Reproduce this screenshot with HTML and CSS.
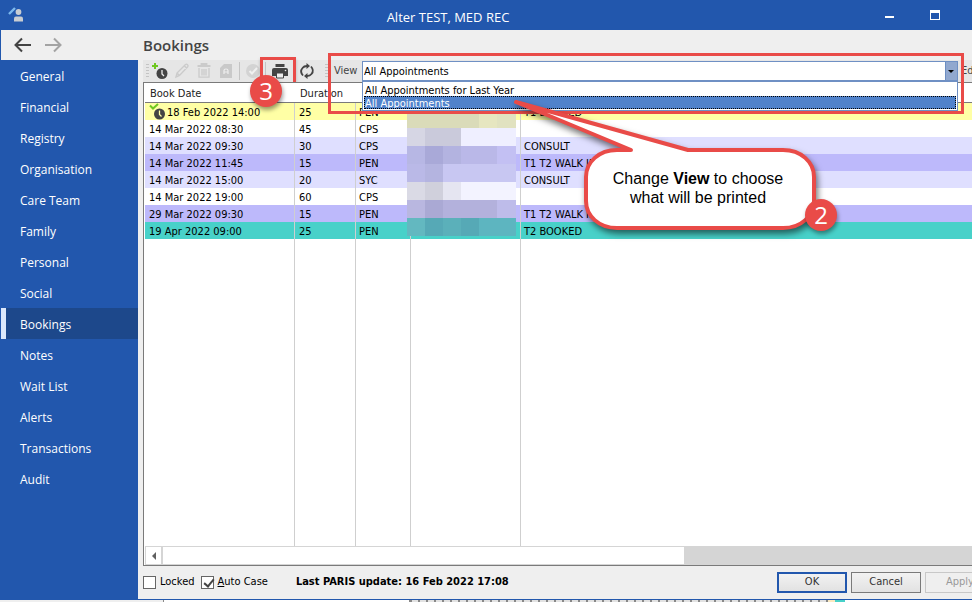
FILE: index.html
```html
<!DOCTYPE html>
<html lang="en">
<head>
<meta charset="utf-8">
<title>Alter TEST, MED REC</title>
<link rel="stylesheet" href="styles.css">
</head>
<body>
<div class="window">
  <header class="titlebar">
    <svg class="app-icon" width="16" height="16" viewBox="0 0 16 16" aria-hidden="true">
      <path d="M1 7 7 1" stroke="#7db9ee" stroke-width="2.4"/>
      <circle cx="10.500" cy="5" r="2.900" fill="#c9cdd2"/>
      <path d="M6 14.500v-3q0-2 2-2h5q2 0 2 2v3z" fill="#c9cdd2"/>
    </svg>
    <h1 class="title">Alter TEST, MED REC</h1>
    <div class="controls">
      <button class="ctl" aria-label="Minimize"><svg width="10" height="12" viewBox="0 0 10 12"><path d="M0 7h9v2H0z" fill="#fff"/></svg></button>
      <button class="ctl" aria-label="Maximize"><svg width="10" height="12" viewBox="0 0 10 12"><path d="M0 1h10v10H0zM1 4v6h8V4z" fill="#fff" fill-rule="evenodd"/></svg></button>
    </div>
  </header>

  <div class="heading">
    <div class="history">
      <button class="ctl" aria-label="Back"><svg width="18" height="16" viewBox="0 0 18 16" fill="none" stroke="#444" stroke-width="2"><path d="M17 8H2M8 1.500 1.500 8 8 14.500"/></svg></button>
      <button class="ctl" aria-label="Forward"><svg width="18" height="16" viewBox="0 0 18 16" fill="none" stroke="#a3a3a3" stroke-width="2"><path d="M1 8h15M10 1.500 16.500 8 10 14.500"/></svg></button>
    </div>
    <h2 class="page-title">Bookings</h2>
  </div>

  <div class="body">
    <nav class="sidebar">
      <a href="#">General</a>
      <a href="#">Financial</a>
      <a href="#">Registry</a>
      <a href="#">Organisation</a>
      <a href="#">Care Team</a>
      <a href="#">Family</a>
      <a href="#">Personal</a>
      <a href="#">Social</a>
      <a href="#" class="active" aria-current="page">Bookings</a>
      <a href="#">Notes</a>
      <a href="#">Wait List</a>
      <a href="#">Alerts</a>
      <a href="#">Transactions</a>
      <a href="#">Audit</a>
    </nav>

    <main class="content">
      <div class="toolbar">
        <span class="grip"></span>
        <button class="tool" aria-label="New booking"><svg width="18" height="18" viewBox="0 0 18 18"><path d="M4 1v6M1 4h6" stroke="#6fc821" stroke-width="2"/><circle cx="11" cy="11.500" r="5.500" fill="#444"/><path d="M11 8v4l2 2" fill="none" stroke="#eee" stroke-width="1.300"/></svg></button>
        <button class="tool" aria-label="Edit booking"><svg width="18" height="18" viewBox="0 0 18 18" fill="none" stroke="#cbcbcb" stroke-width="1.400"><path d="m3 15 1-4 8.500-8.500q1-.8 2 .2t.2 2L6.500 13.500zM11.500 4l2.500 2.500M4 11l2.500 2.500"/></svg></button>
        <button class="tool" aria-label="Delete booking"><svg width="18" height="18" viewBox="0 0 18 18" fill="none" stroke="#cbcbcb"><path d="M2.500 4h13M6.500 3.500V2h5v1.500" stroke-width="1.800"/><path d="M4 6v9.200h10V6M7 7v6.500M9 7v6.500M11 7v6.500" stroke-width="1.300"/></svg></button>
        <button class="tool" aria-label="Archive booking"><svg width="18" height="18" viewBox="0 0 18 18"><path d="M7 2h8v14H3V6z" fill="#c9c9c9"/><path d="M7 12V8.500q0-1.500 2-1.500t2 1.500V12M7 10h4" fill="none" stroke="#eee" stroke-width="1.200"/></svg></button>
        <span class="divider"></span>
        <button class="tool" aria-label="Confirm booking"><svg width="18" height="18" viewBox="0 0 18 18"><circle cx="9" cy="9" r="7" fill="#d3d3d3"/><path d="m5.500 9 2.500 2.500L13 6" fill="none" stroke="#f0f0f0" stroke-width="2"/></svg></button>
        <div class="print">
          <span class="divider"></span>
          <button class="tool" aria-label="Print"><svg width="18" height="18" viewBox="0 0 18 18"><path d="M4.500 2h9v3h-9z" fill="#444"/><path d="M3 6h12q2 0 2 2v6H1V8q0-2 2-2z" fill="#444"/><path d="M5.500 11h7v5h-7z" fill="#eee" stroke="#444"/><circle cx="14.500" cy="8.500" r=".8" fill="#eee"/></svg></button>
          <span class="print-frame"></span>
          <span class="badge badge-print">3</span>
        </div>
        <button class="tool refresh" aria-label="Refresh"><svg width="18" height="18" viewBox="0 0 18 18"><path d="M5 13.500Q1.500 9.500 4.500 6 6 4 9 4M13 4.500q3.500 4 .5 7.500Q12 14 9 14" fill="none" stroke="#444" stroke-width="1.800"/><path d="M8.500 1v6l3.500-3zM9.500 11v6L6 14z" fill="#444"/></svg></button>
        <div class="view">
          <span class="grip"></span>
          <label for="view">View</label>
          <div class="combo">
            <select id="view"><option>All Appointments for Last Year</option><option selected>All Appointments</option></select>
            <svg class="arrow" width="12" height="18" viewBox="0 0 12 18" aria-hidden="true"><path d="M0 0h12v18H0z" fill="#91a8cf"/><path d="M0 0v18" stroke="#6c8ec2" stroke-width="2"/><path d="M3 8h6L6 11z" fill="#000"/></svg>
            <ul class="list" aria-label="Views">
              <li>All Appointments for Last Year</li>
              <li class="chosen">All Appointments</li>
            </ul>
          </div>
          <span class="view-frame"></span>
        </div>
        <span class="more">Edit</span>
      </div>

      <div class="grid">
        <table>
          <colgroup><col class="c-date"><col class="c-dur"><col class="c-site"><col class="c-name"><col></colgroup>
          <thead><tr><th>Book Date</th><th>Duration</th><th></th><th></th><th></th></tr></thead>
          <tbody>
            <tr class="yellow"><td class="pending"><svg width="18" height="17" viewBox="0 0 18 17" aria-hidden="true"><path d="m1 2.500 3 3L9 1" fill="none" stroke="#6fc821" stroke-width="2"/><circle cx="10.500" cy="11" r="5.500" fill="#444"/><path d="M10.500 7.500v4l2 2" fill="none" stroke="#ffa" stroke-width="1.300"/></svg>18 Feb 2022 14:00</td><td>25</td><td>PEN</td><td></td><td>T1 BOOKED</td></tr>
            <tr><td>14 Mar 2022 08:30</td><td>45</td><td>CPS</td><td></td><td></td></tr>
            <tr class="pale"><td>14 Mar 2022 09:30</td><td>30</td><td>CPS</td><td></td><td>CONSULT</td></tr>
            <tr class="violet"><td>14 Mar 2022 11:45</td><td>15</td><td>PEN</td><td></td><td>T1 T2 WALK IN</td></tr>
            <tr class="pale"><td>14 Mar 2022 15:00</td><td>20</td><td>SYC</td><td></td><td>CONSULT</td></tr>
            <tr><td>14 Mar 2022 19:00</td><td>60</td><td>CPS</td><td></td><td></td></tr>
            <tr class="violet"><td>29 Mar 2022 09:30</td><td>15</td><td>PEN</td><td></td><td>T1 T2 WALK IN</td></tr>
            <tr class="teal"><td>19 Apr 2022 09:00</td><td>25</td><td>PEN</td><td></td><td>T2 BOOKED</td></tr>
            <tr class="filler"><td></td><td></td><td></td><td></td><td></td></tr>
          </tbody>
        </table>
        <svg class="mosaic" width="109" height="126" viewBox="0 0 109 126" shape-rendering="crispEdges" aria-hidden="true">
          <path fill="#dadbb9" d="M0 0h72v18H0z"/><path fill="#e6e6c0" d="M72 0h18v18H72z"/><path fill="#e1e2c0" d="M90 0h19v18H90z"/>
          <path fill="#d6d6e4" d="M0 18h18v18H0z"/><path fill="#cacadb" d="M18 18h36v18H18z"/><path fill="#efefff" d="M54 18h55v18H54z"/>
          <path fill="#b7b7e4" d="M0 36h18v18H0z"/><path fill="#a9a9d8" d="M18 36h18v18H18z"/><path fill="#b3b3e0" d="M36 36h18v18H36z"/><path fill="#bab8e8" d="M54 36h36v18H54z"/><path fill="#c3c0f3" d="M90 36h19v18H90z"/>
          <path fill="#bab9e7" d="M0 54h18v18H0z"/><path fill="#b4b4e0" d="M18 54h18v18H18z"/><path fill="#c8c7f2" d="M36 54h73v18H36z"/>
          <path fill="#dadae5" d="M0 72h18v18H0z"/><path fill="#d0d0dc" d="M18 72h18v18H18z"/><path fill="#e5e5f1" d="M36 72h18v18H36z"/><path fill="#f3f3ff" d="M54 72h55v18H54z"/>
          <path fill="#b9b7e0" d="M0 90h18v18H0z"/><path fill="#aaa9d4" d="M18 90h18v18H18z"/><path fill="#b3b1dc" d="M36 90h54v18H36z"/><path fill="#bebcea" d="M90 90h19v18H90z"/>
          <path fill="#63b8c0" d="M0 108h18v18H0z"/><path fill="#56a9b6" d="M18 108h18v18H18z"/><path fill="#5bb0ba" d="M36 108h18v18H36z"/><path fill="#56a9b6" d="M54 108h18v18H54z"/><path fill="#5db5c0" d="M72 108h37v18H72z"/>
        </svg>
        <div class="scrollbar">
          <button class="scroll-left" aria-label="Scroll left"><svg width="6" height="8" viewBox="0 0 6 8"><path d="M5 0v8L1 4z" fill="#606060"/></svg></button>
          <span class="thumb"></span>
          <span class="track"></span>
        </div>
      </div>

      <footer class="footer">
        <label class="check"><input type="checkbox"><span>Locked</span></label>
        <label class="check"><input type="checkbox" checked><span><u>A</u>uto Case</span></label>
        <strong class="status">Last PARIS update: 16 Feb 2022 17:08</strong>
        <div class="actions">
          <button class="btn primary">OK</button>
          <button class="btn">Cancel</button>
          <button class="btn" disabled>Apply</button>
        </div>
      </footer>

      <aside class="callout">
        <svg width="320" height="150" viewBox="0 0 320 150" aria-hidden="true">
          <path d="M12 8 184 56h95c18 0 31 12 31 27v24c0 15-13 27-31 27H113c-18 0-31-12-31-27V83c0-15 13-27 31-27h14z" fill="#fff" stroke="#e94b48" stroke-width="4" stroke-linejoin="round"/>
        </svg>
        <p>Change <b>View</b> to choose<br>what will be printed</p>
        <span class="badge badge-view">2</span>
      </aside>
    </main>
  </div>
  <div class="behind"><span class="pane"></span><span class="hatch"></span><span class="mark"></span></div>
</div>
</body>
</html>
```
FILE: styles.css
```css
* { box-sizing: border-box; }

body {
  margin: 0;
  background: #fff;
  color: #000;
  font: 11px/16px "DejaVu Sans Condensed", "DejaVu Sans", sans-serif;
}

button { margin: 0; padding: 0; border: 0; background: none; font: inherit; color: inherit; }
svg { display: block; }

.window { display: flex; flex-direction: column; height: 100vh; overflow: hidden; }

/* Title bar */
.titlebar { display: flex; align-items: center; height: 30px; flex: none; padding-left: 8px; background: #2257ad; color: #fff; }
.title { flex: 1; margin: 0 0 0 8px; padding-top: 4px; font: 13px/20px "Open Sans", "Noto Sans", sans-serif; text-align: center; }
.controls { display: flex; gap: 35px; width: 108px; padding-left: 21px; }

/* Heading row */
.heading { display: flex; align-items: center; height: 30px; flex: none; border-left: 1px solid #2257ad; background: #efefef; }
.history { display: flex; gap: 12px; width: 142px; padding-left: 13px; }
.page-title { margin: 0; color: #444; font: 600 15px/20px "Open Sans", "Noto Sans", sans-serif; }

.body { display: flex; flex: 1; min-height: 0; border-bottom: 1px solid #2257ad; }

/* Navigation */
.sidebar { width: 138px; flex: none; padding-left: 1px; background: #2257ad; }
.sidebar a { display: block; height: 31px; padding-left: 19px; color: #fff; font: 12px/34px "Open Sans", "Noto Sans", sans-serif; text-decoration: none; }
.sidebar .active { padding-left: 14px; border-left: 5px solid #dce8fb; background: #1d488b; }

.content { position: relative; display: flex; flex: 1; flex-direction: column; min-width: 0; padding-left: 5px; background: #efefef; }

/* Toolbar */
.toolbar { display: flex; align-items: center; height: 22px; flex: none; padding-left: 3px; background: #e6e6e6; color: #444; }
.grip { width: 3px; height: 14px; flex: none; background: repeating-linear-gradient(#c4c4c4 0 1px, transparent 1px 3px); }
.tool { display: flex; justify-content: center; width: 22px; flex: none; }
.divider { width: 1px; height: 18px; flex: none; background: #c4c4c4; }
.toolbar > .divider { margin: 0 2px; }
.print { position: relative; display: flex; align-items: center; gap: 3px; margin: 0 5px 0 1px; }
.print-frame { position: absolute; inset: -5px -5px -5px -5px; border: 3px solid #e94b48; box-shadow: 0 2px 3px #0003; }
.refresh { margin-right: 7px; }
.view { position: relative; display: flex; align-items: center; flex: 1; min-width: 0; }
.view label { width: 34px; padding-left: 6px; flex: none; }
.view-frame { position: absolute; inset: -8px -6px -33px 3px; border: 3px solid #e94b48; z-index: 3; }
.combo { position: relative; flex: 1; min-width: 0; }
.combo select { display: block; width: 100%; height: 20px; padding: 1px 1px 0; border: 1px solid #6f90c4; border-radius: 0; background: #fff; color: #000; font: inherit; appearance: none; }
.arrow { position: absolute; top: 1px; right: 1px; }
.list { position: absolute; top: 20px; left: 0; right: 0; margin: 0; padding: 1px; border: 1px solid #6f90c4; background: #fff; color: #000; list-style: none; z-index: 2; }
.list li { height: 13px; padding-left: 1px; line-height: 15px; }
.list .chosen { padding-left: 0; border: 1px dotted #000; background: #5082cb; color: #fff; line-height: 13px; overflow: hidden; }
.more { width: 14px; padding-left: 3px; overflow: hidden; flex: none; }

/* Markers */
.badge { position: absolute; width: 32px; height: 32px; border-radius: 50%; background: #e94b48; color: #fff; font: 24px/32px "Open Sans", "Noto Sans", sans-serif; text-align: center; box-shadow: 1px 3px 4px #0006; z-index: 4; }
.badge-print { top: 13px; left: -15px; }
.badge-view { top: 105px; left: 301px; }

/* Booking list */
.grid { position: relative; display: flex; flex: 1; flex-direction: column; min-height: 0; padding-left: 1px; border: solid #7a7a7a; border-width: 1px 0 1px 1px; background: #fff; overflow: hidden; }
table { width: 100%; flex: 1; border-spacing: 0; table-layout: fixed; }
.c-date { width: 150px; }
.c-dur { width: 61px; }
.c-site { width: 55px; }
.c-name { width: 110px; }
th { height: 20px; padding: 3px 5px 0; border-bottom: 1px solid #7a7a7a; color: #222; font-weight: 400; line-height: 16px; text-align: left; }
td { height: 17px; padding: 2px 0 0 4px; border-right: 1px solid #cfcfcf; line-height: 15px; white-space: nowrap; overflow: hidden; }
td:nth-child(n+3) { padding-left: 3px; }
td:last-child { border-right: 0; }
.pending svg { float: left; margin: -2px 0; }
.yellow { background: #ffffa5; }
.pale { background: #dfdfff; }
.violet { background: #bdb9fb; }
.teal { background: #48d1c9; }
.filler td { height: auto; }
.mosaic { position: absolute; top: 27px; left: 263px; }

.scrollbar { display: flex; height: 19px; flex: none; border-top: 1px solid #d5d5d5; border-bottom: 1px solid #d5d5d5; }
.scroll-left { display: flex; align-items: center; justify-content: center; width: 18px; border: solid #d5d5d5; border-width: 0 2px 0 1px; }
.thumb { width: 63%; }
.track { flex: 1; background: #d5d5d5; }

/* Footer */
.footer { display: flex; align-items: center; height: 33px; flex: none; padding-bottom: 1px; overflow: hidden; }
.check { display: flex; align-items: center; gap: 4px; margin-right: 6px; }
.check input { position: relative; width: 13px; height: 13px; margin: 0; border: 1px solid #666; background: #fff; appearance: none; }
.check input:checked::after { content: ""; position: absolute; top: 0; left: 4px; width: 4px; height: 8px; border: solid #444; border-width: 0 2px 2px 0; transform: rotate(40deg); }
.status { margin-left: 22px; }
.actions { display: flex; gap: 4px; margin: 0 -23px 0 auto; }
.btn { width: 70px; height: 21px; border: 1px solid #7a7a7a; background: linear-gradient(#f2f2f2, #e2e2e2); color: #333; }
.btn.primary { border: 2px solid #2257ad; }
.btn:disabled { border-color: #c8c8c8; background: #efefef; color: #999; }

/* Balloon pointing at the open list */
.callout { position: absolute; top: 34px; left: 366px; z-index: 5; }
.callout svg { filter: drop-shadow(2px 4px 3px #0008); }
.callout p { position: absolute; top: 75px; left: 78px; width: 232px; margin: 0; font: 16px/19px "Liberation Sans", sans-serif; text-align: center; }

/* Sliver of the window underneath */
.behind { display: flex; height: 2px; flex: none; background: #efefef; }
.pane { width: 247px; margin-left: 163px; border: solid #888; border-width: 0 1px; background: #fff; }
.hatch { width: 418px; background: repeating-linear-gradient(90deg, #888 0 2px, #e2e2e2 2px 8px); }
.mark { flex: 1; background: linear-gradient(90deg, #fbe9c0 7px, #48d1c9 7px 17px, #fff 17px); }
```
